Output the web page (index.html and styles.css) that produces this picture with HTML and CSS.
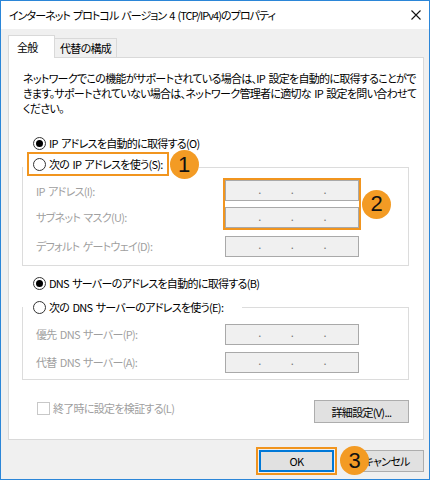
FILE: index.html
```html
<!DOCTYPE html>
<html lang="ja">

<head>
  <meta charset="UTF-8" />
  <meta name="viewport" content="width=device-width, initial-scale=1.0" />
  <title>インターネット プロトコル バージョン 4 (TCP/IPv4)のプロパティ</title>
  <link rel="stylesheet" href="styles.css">
</head>

<body>
  <div class="window">
    <header class="titlebar">
      <span class="title">インターネット プロトコル バージョン 4 (TCP/IPv4)のプロパティ</span>
      <svg class="close" width="10" height="10" viewBox="0 0 10 10">
        <path d="M0.5 0.5L9.5 9.5M9.5 0.5L0.5 9.5" stroke="#111" stroke-width="1.1" fill="none" />
      </svg>
    </header>

    <div class="dialog">
      <nav class="tabs">
        <span class="tab active">全般</span>
        <span class="tab">代替の構成</span>
      </nav>

      <section class="panel">
        <p class="desc">ネットワークでこの機能がサポートされている場合は、IP 設定を自動的に取得することがで<br>きます。サポートされていない場合は、ネットワーク管理者に適切な IP 設定を問い合わせて<br>ください。</p>

        <label class="option"><span class="radio checked"></span>IP アドレスを自動的に取得する(O)</label>

        <fieldset class="group group-ip">
          <legend class="legend-ip">
            <span class="mark"><span class="radio"></span>次の IP アドレスを使う(S):</span>
            <span class="badge badge-1">1</span>
          </legend>
          <div class="fields fields-ip">
            <span class="label row-1">IP アドレス(I):</span>
            <span class="label row-2">サブネット マスク(U):</span>
            <div class="mark-box">
              <div class="ip"><span>.</span><span>.</span><span>.</span></div>
              <div class="ip"><span>.</span><span>.</span><span>.</span></div>
            </div>
            <span class="badge badge-2">2</span>
            <span class="label row-3">デフォルト ゲートウェイ(D):</span>
            <div class="ip field row-3"><span>.</span><span>.</span><span>.</span></div>
          </div>
        </fieldset>

        <label class="option option-dns"><span class="radio checked"></span>DNS サーバーのアドレスを自動的に取得する(B)</label>

        <fieldset class="group group-dns">
          <legend class="legend-dns"><span class="radio"></span>次の DNS サーバーのアドレスを使う(E):</legend>
          <div class="fields fields-dns">
            <span class="label">優先 DNS サーバー(P):</span>
            <div class="ip field"><span>.</span><span>.</span><span>.</span></div>
            <span class="label">代替 DNS サーバー(A):</span>
            <div class="ip field"><span>.</span><span>.</span><span>.</span></div>
          </div>
        </fieldset>

        <div class="panel-foot">
          <label class="check"><span class="box"></span>終了時に設定を検証する(L)</label>
          <button class="btn btn-advanced">詳細設定(V)...</button>
        </div>
      </section>

      <footer class="actions">
        <span class="ok-mark"><button class="btn btn-ok">OK</button></span>
        <span class="badge badge-3">3</span>
        <button class="btn">キャンセル</button>
      </footer>
    </div>
  </div>
</body>

</html>
```

FILE: styles.css
```css
body {
  margin: 0;
  font-family: "Noto Sans CJK JP", "Noto Sans", sans-serif;
  font-size: 11px;
  letter-spacing: -0.7px;
  word-spacing: 1.5px;
  font-feature-settings: "palt";
  color: #000;
}

.window {
  width: 430px;
  height: 480px;
  box-sizing: border-box;
  border: 1px solid #2b86d8;
  background: #f0f0f0;
  display: flex;
  flex-direction: column;
  white-space: nowrap;
}

.titlebar {
  height: 28px;
  background: #fff;
  display: flex;
  align-items: center;
  justify-content: space-between;
  padding: 0 8px;
}

.title {
  letter-spacing: -0.95px;
}

.dialog {
  display: flex;
  flex-direction: column;
  padding: 6px 5px 0 7px;
}

/* tabs */
.tabs {
  display: flex;
  align-items: flex-end;
  height: 22px;
}

.tab {
  height: 19px;
  box-sizing: border-box;
  padding: 1px 0 0 5px;
  width: 62px;
  border: 1px solid #d9d9d9;
  border-left: none;
  border-bottom: none;
  background: #f0f0f0;
}

.tab.active {
  position: relative;
  z-index: 1;
  width: 47px;
  height: 23px;
  margin-bottom: -1px;
  padding: 3px 0 0 8px;
  border-left: 1px solid #d9d9d9;
  background: #fff;
}

.panel {
  height: 383px;
  box-sizing: border-box;
  border: 1px solid #d9d9d9;
  background: #fff;
  display: flex;
  flex-direction: column;
}

.desc {
  margin: 0;
  padding: 13px 8px 0 14px;
  line-height: 15px;
}

/* radios */
.option {
  display: flex;
  align-items: center;
  height: 20px;
  margin-top: 17px;
  padding-left: 24px;
}

.option-dns {
  margin-top: 7px;
}

.radio {
  width: 13px;
  height: 13px;
  box-sizing: border-box;
  border: 1px solid #333;
  border-radius: 50%;
  margin-right: 3px;
  display: flex;
  align-items: center;
  justify-content: center;
  flex: none;
}

.radio.checked::after {
  content: "";
  width: 7px;
  height: 7px;
  border-radius: 50%;
  background: #000;
}

/* group boxes */
.group {
  margin: 5px 14px 0 13px;
  padding: 0;
  min-width: 0;
  border: 1px solid #dcdcdc;
}

.group-dns {
  margin-top: 4px;
}

.legend-ip {
  display: flex;
  align-items: flex-start;
  padding: 0;
}

.mark {
  display: flex;
  align-items: center;
  height: 24px;
  box-sizing: border-box;
  margin: -6px 0 0 4px;
  padding: 0 4px 0 4px;
  border: 2px solid #f1951f;
}

.legend-dns {
  display: flex;
  align-items: center;
  width: 219px;
  height: 20px;
  box-sizing: border-box;
  padding: 0 0 0 10px;
}

.fields {
  display: grid;
  grid-template-columns: 187px 138px auto;
  align-items: center;
  padding-left: 13px;
}

.fields-ip {
  grid-template-rows: 26px 26px 32px;
  padding-top: 2px;
  padding-bottom: 3px;
}

.fields-dns {
  grid-template-rows: 28px 28px;
  padding-top: 3px;
  padding-bottom: 3px;
}

.label {
  grid-column: 1;
  color: #9f9f9f;
}

.row-1 {
  grid-row: 1;
}

.row-2 {
  grid-row: 2;
}

.row-3 {
  grid-row: 3;
}

.mark-box {
  grid-column: 2;
  grid-row: 1 / 3;
  align-self: stretch;
  display: flex;
  flex-direction: column;
  justify-content: space-between;
  border: 2px solid #f1951f;
  background: #fff;
}

.ip {
  width: 134px;
  height: 21px;
  box-sizing: border-box;
  border: 1px solid #a9a9a9;
  background: #f0f0f0;
  display: flex;
  justify-content: space-evenly;
  align-items: center;
  padding: 0 2px 3px;
  color: #777;
  line-height: 1;
}

.field {
  grid-column: 2;
  margin-left: 2px;
}

/* annotation badges */
.badge {
  width: 29px;
  height: 29px;
  border-radius: 50%;
  background: #f39b24;
  color: #111;
  font-family: "Liberation Sans", Arial, sans-serif;
  font-size: 22px;
  letter-spacing: 0;
  display: flex;
  align-items: center;
  justify-content: center;
  flex: none;
}

.badge-1 {
  margin: -8px 0 -3px 1px;
}

.badge-2 {
  grid-column: 3;
  grid-row: 1 / 3;
  margin-left: 1px;
}

.badge-3 {
  position: relative;
  z-index: 1;
  margin: 0 -20px 0 3px;
}

/* bottom of panel */
.panel-foot {
  display: flex;
  justify-content: space-between;
  align-items: flex-start;
  margin-top: 20px;
  padding: 0 14px 0 28px;
}

.check {
  display: flex;
  align-items: center;
  height: 16px;
  color: #a0a0a0;
}

.box {
  width: 13px;
  height: 13px;
  box-sizing: border-box;
  border: 1px solid #c8c8c8;
  margin-right: 3px;
}

.btn {
  width: 75px;
  height: 22px;
  padding: 0;
  border: 1px solid #adadad;
  background: #e1e1e1;
  font: inherit;
  letter-spacing: inherit;
  word-spacing: inherit;
  color: #000;
}

.btn-advanced {
  width: 95px;
  height: 23px;
}

.actions {
  display: flex;
  justify-content: flex-end;
  align-items: center;
  margin-top: 6px;
}

.ok-mark {
  display: flex;
  padding: 1px;
  border: 2px solid #f1951f;
}

.btn-ok {
  border-color: #0078d7;
  box-shadow: inset 0 0 0 1px #0078d7;
}
```
